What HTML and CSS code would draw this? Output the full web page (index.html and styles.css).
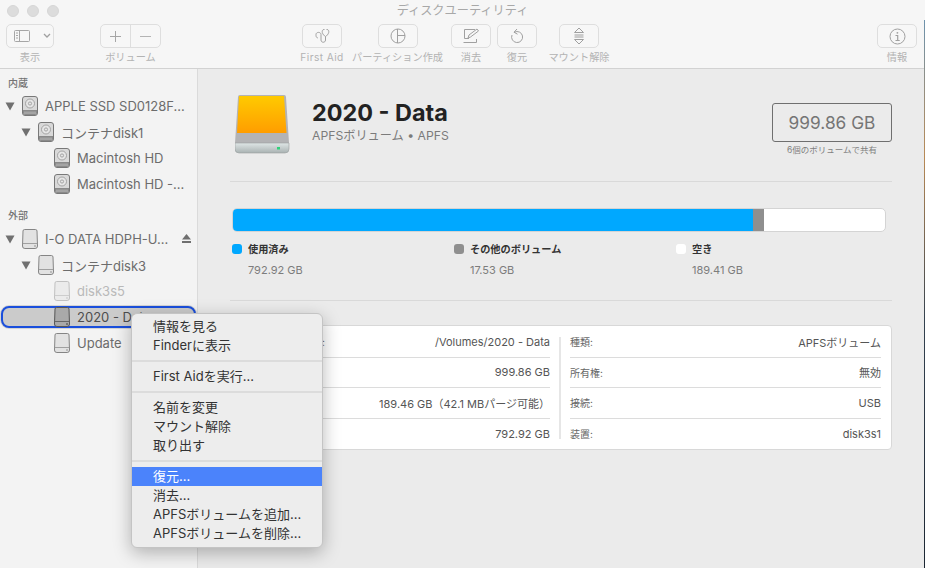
FILE: index.html
```html
<!DOCTYPE html>
<html lang="ja">
<head>
<meta charset="utf-8">
<title>ディスクユーティリティ</title>
<link rel="stylesheet" href="styles.css">
</head>
<body>
<svg class="defs" aria-hidden="true">
  <symbol id="int" viewBox="0 0 16 20">
    <rect x=".5" y=".5" width="15" height="19" rx="2.5" fill="#d9d9d9" stroke="#787878"/>
    <circle cx="8" cy="7.500" r="4.500" fill="#e6e6e6" stroke="#949494" stroke-width=".8"/>
    <circle cx="8" cy="7.500" r="1.600" fill="none" stroke="#949494" stroke-width=".8"/>
    <path d="M1 14h14v3a2 2 0 0 1-2 2H3a2 2 0 0 1-2-2z" fill="#8a8a8a"/>
    <path d="M3 15.500v2.500M5 15.500v2.500M7 15.500v2.500M9 15.500v2.500M11 15.500v2.500M13 15.500v2.500" stroke="#d4d4d4" stroke-width=".7"/>
  </symbol>
  <symbol id="ext" viewBox="0 0 16 20">
    <path d="M2.600.5h10.800a1.600 1.600 0 0 1 1.600 1.500l.5 15a2.400 2.400 0 0 1-2.400 2.500H2.900A2.400 2.400 0 0 1 .5 17L1 2A1.600 1.600 0 0 1 2.600.5z" fill="#e2e2e2" stroke="#858585"/>
    <path d="M1 14.500h14" stroke="#a0a0a0"/>
    <circle cx="13" cy="17" r=".7" fill="#777"/>
  </symbol>
  <symbol id="ext-sel" viewBox="0 0 16 20">
    <path d="M2.600.5h10.800a1.600 1.600 0 0 1 1.600 1.500l.5 15a2.400 2.400 0 0 1-2.400 2.500H2.900A2.400 2.400 0 0 1 .5 17L1 2A1.600 1.600 0 0 1 2.600.5z" fill="#a9a9a9" stroke="#555"/>
    <path d="M1 14.500h14" stroke="#666"/>
    <circle cx="13" cy="17" r=".8" fill="#333"/>
  </symbol>
  <symbol id="tri" viewBox="0 0 10 9">
    <path d="M.5.5h9L5 8.500z" fill="#707070"/>
  </symbol>
</svg>

<div class="window">
  <header class="toolbar">
    <div class="titlebar">
      <div class="lights"><i class="light"></i><i class="light"></i><i class="light"></i></div>
      <div class="wintitle">ディスクユーティリティ</div>
      <div></div>
    </div>
    <div class="tools">
      <div class="tool t-view">
        <div class="btn btn-view">
          <svg width="16" height="13" viewBox="0 0 16 13" fill="none" stroke="#a6a6a6"><rect x=".5" y=".5" width="15" height="11" rx="1"/><path d="M5.500.5v11M2 3h2M2 5.500h2M2 8h2"/></svg>
          <svg width="8" height="6" viewBox="0 0 8 6" fill="none" stroke="#a0a0a0" stroke-width="1.300"><path d="M1 1l3 3 3-3"/></svg>
        </div>
        <span>表示</span>
      </div>
      <div class="tool t-vol">
        <div class="btn btn-vol">
          <div class="seg"><svg width="13" height="13" viewBox="0 0 13 13" stroke="#a6a6a6"><path d="M6.500 1v11M1 6.500h11"/></svg></div>
          <div class="seg seg-r"><svg width="13" height="13" viewBox="0 0 13 13" stroke="#b4b4b4"><path d="M1 6.500h11"/></svg></div>
        </div>
        <span>ボリューム</span>
      </div>
      <div class="tool t-aid">
        <div class="btn"><svg width="17" height="16" viewBox="0 0 17 16" fill="none" stroke="#a0a0a0"><path d="M10.500 1.500H10c-1.500 0-2 1.500-1.700 3 .3 1.500 2 3.500 3.200 4 1.200-.5 2.900-2.500 3.200-4 .3-1.500-.2-3-1.700-3h-.5M11.500 8.500v3.500c0 3-4.500 3-4.500 0V6.500c0-2.800-5-2.800-5 0 0 1.500 0 3 1.800 3.500"/></svg></div>
        <span>First Aid</span>
      </div>
      <div class="tool t-part">
        <div class="btn"><svg width="16" height="16" viewBox="0 0 16 16" fill="none" stroke="#a0a0a0"><circle cx="8" cy="8" r="7"/><path d="M7.500 1v14M7.500 7.500H15"/></svg></div>
        <span>パーティション作成</span>
      </div>
      <div class="tool t-erase">
        <div class="btn"><svg width="18" height="16" viewBox="0 0 18 16" fill="none" stroke="#a0a0a0"><path d="M13 1.500H2.500v9H7M1.500 14.500h13V11M6 10l1-3 8-6 1.500 2-8 6z"/></svg></div>
        <span>消去</span>
      </div>
      <div class="tool t-rest">
        <div class="btn"><svg width="14" height="16" viewBox="0 0 14 16" fill="none" stroke="#a0a0a0"><path d="M4.500 4.200A5.500 5.500 0 1 1 2 7M7 1L4 4.200l3.500 2"/></svg></div>
        <span>復元</span>
      </div>
      <div class="tool t-mount">
        <div class="btn"><svg width="12" height="18" viewBox="0 0 12 18" fill="none" stroke="#a0a0a0"><path d="M6 1l4.500 4.500h-9zM1.500 8h9M1.500 10h9M6 17l-4.500-4.500h9z"/></svg></div>
        <span>マウント解除</span>
      </div>
      <div class="tool t-info">
        <div class="btn"><svg width="17" height="17" viewBox="0 0 17 17" fill="none" stroke="#a0a0a0"><circle cx="8.500" cy="8.500" r="7.500"/><path d="M6.500 7.500h2.200v4.500M6.500 12.500h4.200" stroke-width="1.200"/><circle cx="8.400" cy="4.800" r=".9" fill="#a0a0a0" stroke="none"/></svg></div>
        <span>情報</span>
      </div>
    </div>
  </header>

  <div class="content">
    <aside class="sidebar">
      <div class="sec-head">内蔵</div>
      <div class="row l0"><svg class="tri"><use href="#tri"/></svg><svg class="drive"><use href="#int"/></svg><span class="name">APPLE SSD SD0128F...</span></div>
      <div class="row l1"><svg class="tri"><use href="#tri"/></svg><svg class="drive"><use href="#int"/></svg><span class="name">コンテナdisk1</span></div>
      <div class="row l2"><svg class="drive"><use href="#int"/></svg><span class="name">Macintosh HD</span></div>
      <div class="row l2"><svg class="drive"><use href="#int"/></svg><span class="name">Macintosh HD -...</span></div>
      <div class="sec-head sec-ext">外部</div>
      <div class="row l0"><svg class="tri"><use href="#tri"/></svg><svg class="drive"><use href="#ext"/></svg><span class="name">I-O DATA HDPH-U...</span>
        <svg class="eject" width="9" height="9" viewBox="0 0 9 9" fill="#6f6f6f"><path d="M4.500 0L9 5.500H0zM0 7h9v2H0z"/></svg></div>
      <div class="row l1"><svg class="tri"><use href="#tri"/></svg><svg class="drive"><use href="#ext"/></svg><span class="name">コンテナdisk3</span></div>
      <div class="row l2 dim"><svg class="drive"><use href="#ext"/></svg><span class="name">disk3s5</span></div>
      <div class="row l2 sel"><svg class="drive"><use href="#ext-sel"/></svg><span class="name">2020 - Data</span></div>
      <div class="row l2"><svg class="drive"><use href="#ext"/></svg><span class="name">Update</span></div>
    </aside>

    <main class="main">
      <section class="head">
        <svg class="bigdrive" viewBox="0 0 56 60" width="56" height="60">
          <defs>
            <linearGradient id="org" x1="0" y1="0" x2="0" y2="1"><stop offset="0" stop-color="#ffca00"/><stop offset="1" stop-color="#ff9d00"/></linearGradient>
            <linearGradient id="slv" x1="0" y1="0" x2="0" y2="1"><stop offset="0" stop-color="#dfe6e6"/><stop offset="1" stop-color="#a9b2b2"/></linearGradient>
          </defs>
          <path d="M5 0h44a2 2 0 0 1 2 2l3 46H0L3 2a2 2 0 0 1 2-2z" fill="#b3b3b5"/>
          <path d="M4 1h45l2.500 37H2z" fill="url(#org)"/>
          <path d="M0 48h54v6a4 4 0 0 1-4 4H4a4 4 0 0 1-4-4z" fill="url(#slv)" stroke="#9aa0a0" stroke-width=".6"/>
          <rect x="42" y="52" width="3" height="2.500" fill="#2fd27a"/>
        </svg>
        <div class="head-text">
          <h1>2020 - Data</h1>
          <p>APFSボリューム • APFS</p>
        </div>
        <div class="cap">
          <div class="cap-box">999.86 GB</div>
          <div class="cap-note">6個のボリュームで共有</div>
        </div>
      </section>

      <section class="usage">
        <div class="bar"><div class="bar-used"></div><div class="bar-other"></div></div>
        <div class="legend">
          <div class="leg"><div class="leg-t"><i class="dot d-blue"></i>使用済み</div><div class="leg-v">792.92 GB</div></div>
          <div class="leg"><div class="leg-t"><i class="dot d-gray"></i>その他のボリューム</div><div class="leg-v">17.53 GB</div></div>
          <div class="leg"><div class="leg-t"><i class="dot d-white"></i>空き</div><div class="leg-v">189.41 GB</div></div>
        </div>
      </section>

      <section class="card">
        <div class="col col-l">
          <div class="kv"><span>マウントポイント:</span><b>/Volumes/2020 - Data</b></div>
          <div class="kv"><span>容量:</span><b>999.86 GB</b></div>
          <div class="kv"><span>利用可能:</span><b>189.46 GB（42.1 MBパージ可能）</b></div>
          <div class="kv"><span>使用済み:</span><b>792.92 GB</b></div>
        </div>
        <div class="vr"></div>
        <div class="col col-r">
          <div class="kv"><span>種類:</span><b>APFSボリューム</b></div>
          <div class="kv"><span>所有権:</span><b>無効</b></div>
          <div class="kv"><span>接続:</span><b>USB</b></div>
          <div class="kv"><span>装置:</span><b>disk3s1</b></div>
        </div>
      </section>
    </main>
  </div>

  <nav class="menu">
    <div class="mi">情報を見る</div>
    <div class="mi">Finderに表示</div>
    <div class="msep"></div>
    <div class="mi">First Aidを実行...</div>
    <div class="msep"></div>
    <div class="mi">名前を変更</div>
    <div class="mi">マウント解除</div>
    <div class="mi">取り出す</div>
    <div class="msep"></div>
    <div class="mi on">復元...</div>
    <div class="mi">消去...</div>
    <div class="mi">APFSボリュームを追加...</div>
    <div class="mi">APFSボリュームを削除...</div>
  </nav>
  <div class="wallpaper"></div>
</div>
</body>
</html>
```

FILE: styles.css
```css
* { box-sizing: border-box; }
html, body { margin: 0; padding: 0; }
body {
  width: 925px;
  height: 568px;
  overflow: hidden;
  font-family: Inter, "Noto Sans CJK JP", sans-serif;
  background: #ebebeb;
}
.defs { position: absolute; width: 0; height: 0; }
.window { position: relative; width: 925px; height: 568px; display: flex; flex-direction: column; }

/* toolbar */
.toolbar { height: 69px; background: #f6f6f6; border-bottom: 1px solid #d2d2d2; flex: none; }
.titlebar { height: 20px; display: grid; grid-template-columns: 1fr auto 1fr; align-items: center; }
.lights { display: flex; gap: 8px; padding-left: 7px; }
.light { width: 12px; height: 12px; border-radius: 50%; background: #dcdcdc; border: 1px solid #d6d6d6; }
.wintitle { font-size: 12.200px; color: #a8a8a8; line-height: 20px; margin-top: 1px; }
.tools { display: flex; padding: 4px 8px 0 6px; }
.tool { display: flex; flex-direction: column; align-items: center; }
.tool span { font-size: 10.200px; line-height: 14px; margin-top: 2px; color: #b3b3b3; white-space: nowrap; }
.btn {
  width: 40px; height: 24px; background: #f7f7f7;
  border: 1px solid #dedede; border-radius: 5px;
  display: flex; align-items: center; justify-content: center;
}
.t-view { width: 48px; }
.btn-view { width: 48px; justify-content: flex-start; gap: 13px; padding-left: 7px; }
.t-vol { width: 61px; margin-left: 46px; }
.btn-vol { width: 61px; }
.seg { flex: 1; height: 100%; display: flex; align-items: center; justify-content: center; }
.seg-r { border-left: 1px solid #dedede; }
.t-aid { width: 44px; margin-left: 139px; }
.t-aid span { letter-spacing: .4px; }
.t-part { width: 91px; margin-left: 8px; }
.t-erase { width: 40px; margin-left: 8px; }
.t-rest { width: 40px; margin-left: 6px; }
.t-mount { width: 62px; margin-left: 11px; }
.t-info { width: 40px; margin-left: auto; }

/* layout */
.content { flex: 1; display: flex; min-height: 0; }
.sidebar { width: 198px; flex: none; background: #f3f3f3; border-right: 1px solid #dadada; padding-top: 4px; }
.sec-head { height: 20px; line-height: 20px; padding-left: 8px; font-size: 10px; font-weight: 500; color: #747474; }
.sec-ext { height: 21px; margin-top: 8px; }
.row { height: 26px; display: flex; align-items: center; font-size: 13px; color: #6c6c6c; white-space: nowrap; position: relative; }
.l0 { padding-left: 5px; }
.l1 { padding-left: 21px; }
.l2 { padding-left: 54px; }
.tri { width: 10px; height: 9px; margin-right: 7px; flex: none; }
.drive { width: 16px; height: 20px; margin-right: 7px; flex: none; }
.eject { position: absolute; left: 182px; top: 8px; }
.dim { color: #b9b9b9; }
.dim .drive { opacity: .45; }
.sel { color: #4d4d4d; }
.sel::before {
  content: ""; position: absolute; left: 1px; right: 1px; top: 2px; bottom: 2px;
  background: #cbcbcb; border: 2px solid #1a4fdc; border-radius: 8px;
  box-shadow: 0 0 0 1px #d4d4d4;
}
.sel > * { position: relative; }

.main { flex: 1; min-width: 0; padding: 0 33px 0 32px; }

.head { height: 113px; display: flex; align-items: flex-start; padding: 26px 0 0 5px; border-bottom: 1px solid #d9d9d9; }
.bigdrive { flex: none; margin-right: 23px; }
.head-text { flex: 1; padding-top: 5px; margin-left: -2px; }
.head-text h1 { margin: 0; font-size: 23.400px; line-height: 26px; font-weight: 700; color: #222; }
.head-text p { margin: 2px 0 0; font-size: 12.200px; line-height: 16px; color: #7b7b7b; }
.cap { width: 120px; margin-top: 8px; text-align: center; }
.cap-box { height: 39px; line-height: 37px; border: 1px solid #6f6f6f; border-radius: 3px; font-size: 17.300px; color: #757575; }
.cap-note { font-size: 8.500px; line-height: 12px; margin-top: 2px; color: #7f7f7f; }

.usage { height: 119px; padding: 26px 6px 0 2px; border-bottom: 1px solid #d9d9d9; }
.bar { height: 24px; display: flex; background: #fff; border: 1px solid #d4d4d4; border-radius: 5px; overflow: hidden; }
.bar-used { width: 521px; background: #00a8ff; margin: -1px 0 -1px -1px; }
.bar-other { width: 11px; background: #8f8f8f; margin: -1px 0; }
.legend { display: grid; grid-template-columns: repeat(3, 222px); margin-top: 10px; }
.leg-t { display: flex; align-items: center; font-size: 10.200px; line-height: 14px; font-weight: 700; color: #333; }
.dot { width: 10px; height: 10px; border-radius: 3px; margin-right: 6px; flex: none; }
.d-blue { background: #00a8ff; }
.d-gray { background: #8f8f8f; }
.d-white { background: #fff; }
.leg-v { font-size: 11px; line-height: 14px; margin: 7px 0 0 16px; color: #7d7d7d; }

.card {
  height: 125px; margin-top: 24px; display: flex; background: #fff;
  border: 1px solid #d8d8d8; border-radius: 4px; padding: 1px 10px 0 11px;
}
.col { display: flex; flex-direction: column; }
.col-l { width: 308px; }
.col-r { flex: 1; }
.vr { width: 2px; margin: 10px 9px; background: #e6e6e6; flex: none; }
.kv {
  height: 31px; display: flex; justify-content: space-between; align-items: center;
  border-bottom: 1px solid #dcdcdc; font-size: 11px; color: #555;
}
.kv:last-child { border-bottom: 0; }
.kv span { font-size: 10px; color: #666; }
.kv b { font-weight: 400; }

/* context menu */
.menu {
  position: absolute; left: 131px; top: 313px; width: 192px; height: 235px;
  padding: 3px 0 0; background: #ededed;
  border: 1px solid #c4c4c4; border-radius: 6px;
  box-shadow: 0 5px 18px rgba(0, 0, 0, .28);
}
.mi { height: 19px; line-height: 19px; padding-left: 21px; font-size: 13px; color: #333; white-space: nowrap; }
.mi.on { background: #4b83fb; color: #fff; }
.msep { height: 2px; margin: 5px 0; background: #dcdcdc; }

.wallpaper {
  position: absolute; right: 0; top: 20px; bottom: 0; width: 1px;
  background: linear-gradient(#6e93ad, #b98a55 25%, #33414f 55%, #1c2733);
}
```
